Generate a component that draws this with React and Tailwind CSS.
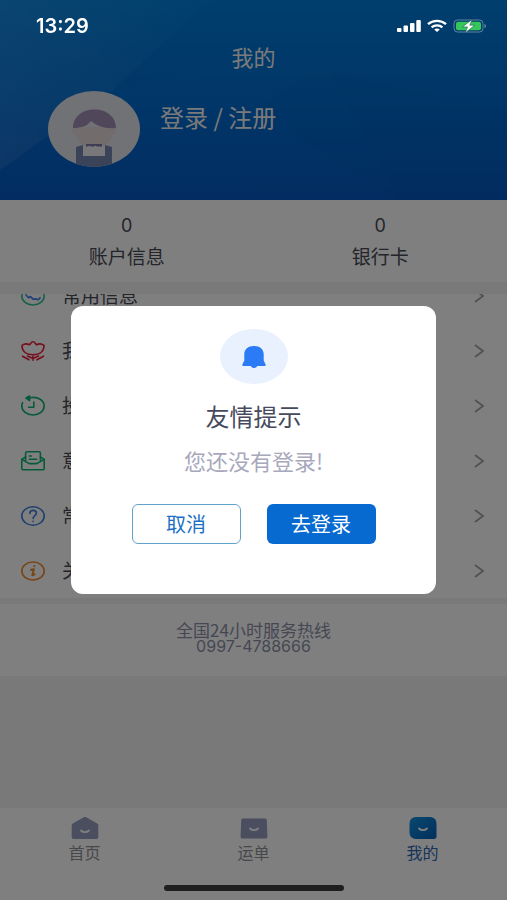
import { useState } from "react";

const MENU = [
    { label: "常用信息", Icon: InfoIcon },
    { label: "我的关注", Icon: FlowerIcon },
    { label: "投诉记录", Icon: HistoryIcon },
    { label: "意见反馈", Icon: MailIcon },
    { label: "常见问题", Icon: QuestionIcon },
    { label: "关于我们", Icon: AboutIcon },
];

const STATS = [
    { label: "账户信息", value: 0 },
    { label: "银行卡", value: 0 },
];

const TABS = [
    { label: "首页", Icon: HomeTabIcon },
    { label: "运单", Icon: OrderTabIcon },
    { label: "我的", Icon: MineTabIcon, active: true },
];

function IconBase({ color, children }) {
    return (
        <svg
            viewBox="0 0 26 22"
            className="h-[22px] w-[26px]"
            fill="none"
            stroke={color}
            strokeWidth="1.6"
            strokeLinecap="round"
            strokeLinejoin="round"
            aria-hidden="true"
        >
            {children}
        </svg>
    );
}

function InfoIcon() {
    return (
        <IconBase color="#2fc48d">
            <ellipse cx="13" cy="11" rx="11.2" ry="9" />
            <path
                d="M6 10l2.500 2.600 2-1 2.500 2.600 3-.4 2 1 2-2"
                stroke="#4a86e8"
                strokeWidth="1.8"
            />
        </IconBase>
    );
}

function FlowerIcon() {
    return (
        <IconBase color="#e8203c">
            <path d="M2 5.400C4.600 3.400 7.400 3.600 9.400 4.800 10.600 4 11.200 1.800 13 1.800s2.400 2.200 3.600 3c2-1.200 4.800-1.400 7.400.6 0 6-4.500 9.400-11 9.400S2 11.400 2 5.400z" />
            <path d="M13 16v4.200M2.500 16.200l6.500 3.600M7.500 16l5.500 2.400 5.500-2.400M23.500 16.200L17 19.800" />
        </IconBase>
    );
}

function HistoryIcon() {
    return (
        <IconBase color="#0fb573">
            <path d="M10.500 2.700C18 1.300 24.200 5.400 24.200 11c0 5-5 9-11.200 9S1.800 16 1.800 11c0-1.300.3-2.300.8-3.300" />
            <path d="M6 3l3.600-2v4.600z" fill="#0fb573" />
            <path d="M13.800 7v5.200H8.600" />
        </IconBase>
    );
}

function MailIcon() {
    return (
        <IconBase color="#0fb573">
            <path d="M5.600 10.500V3.200c0-.8.6-1.400 1.400-1.400h12c.8 0 1.400.6 1.400 1.400v7.300" />
            <path d="M5.600 7L1.800 9.400v9c0 .8.600 1.400 1.400 1.400h19.600c.8 0 1.400-.6 1.400-1.400v-9L20.400 7" />
            <path d="M1.800 9.400l7.400 4.200h7.600l7.400-4.200M9.400 6h2M9.400 9.300h7.400" />
        </IconBase>
    );
}

function QuestionIcon() {
    return (
        <IconBase color="#3b7de0">
            <ellipse cx="13" cy="11" rx="11.2" ry="9.200" />
            <path d="M9.800 8.400c0-1.900 1.400-3 3.300-3s3.300 1.100 3.300 2.800c0 2.300-3.300 2.500-3.300 5.200M13.100 16.300v.2" />
        </IconBase>
    );
}

function AboutIcon() {
    return (
        <IconBase color="#ee8a2c">
            <ellipse cx="13" cy="11" rx="11.2" ry="9" />
            <path
                d="M11 9.800l2.800-.5-1.500 6 2.300-.9M14.300 6.100l.1-.1"
                strokeWidth="2"
            />
        </IconBase>
    );
}

function Smile() {
    return (
        <path
            d="M10 12.500c2.200 2.200 5.800 2.200 8 0"
            fill="none"
            stroke="#fff"
            strokeWidth="1.800"
            strokeLinecap="round"
        />
    );
}

function HomeTabIcon() {
    return (
        <svg viewBox="0 0 28 24" className="h-6 w-7" aria-hidden="true">
            <path
                d="M12.400 1.500c1-.6 2.200-.6 3.200 0l10.200 5.700c1 .5 1.500 1.300 1.500 2.300v11.500c0 1.200-.8 2-2 2H2.700c-1.200 0-2-.8-2-2V9.500c0-1 .5-1.800 1.500-2.300z"
                fill="#949cbd"
            />
            <g transform="translate(0 2)">
                <Smile />
            </g>
        </svg>
    );
}

function OrderTabIcon() {
    return (
        <svg viewBox="0 0 28 24" className="h-6 w-7" aria-hidden="true">
            <path
                d="M3 2.500h22c1 0 1.700.7 1.800 1.700l.6 16.500c0 1-.7 1.800-1.800 1.800H2.400C1.300 22.500.6 21.700.600 20.700l.6-16.500C1.300 3.200 2 2.500 3 2.500z"
                fill="#949cbd"
            />
            <Smile />
        </svg>
    );
}

function MineTabIcon() {
    return (
        <svg viewBox="0 0 28 24" className="h-6 w-7" aria-hidden="true">
            <defs>
                <linearGradient id="mine" x1="0" y1="0" x2="1" y2="1">
                    <stop offset="0" stopColor="#1290e0" />
                    <stop offset="1" stopColor="#0560b8" />
                </linearGradient>
            </defs>
            <path
                d="M8 1h12c5 0 7.500 2.400 7.500 7v12.500c0 1.500-1 2.500-2.500 2.500H8C3 23 .5 20.600.5 16V8C.500 3.400 3 1 8 1z"
                fill="url(#mine)"
            />
            <Smile />
        </svg>
    );
}

function Chevron() {
    return (
        <svg
            viewBox="0 0 12 14"
            className="h-3.5 w-3"
            fill="none"
            stroke="#a3a3a8"
            strokeWidth="1.800"
            aria-hidden="true"
        >
            <path d="M2 1l8 6-8 6" />
        </svg>
    );
}

function Avatar() {
    return (
        <svg
            viewBox="0 0 92 76"
            className="h-[76px] w-[92px] shrink-0"
            role="img"
            aria-label="avatar"
        >
            <clipPath id="face">
                <ellipse cx="46" cy="38" rx="46" ry="38" />
            </clipPath>
            <g clipPath="url(#face)">
                <rect width="92" height="76" fill="#e2e5ec" />
                <path
                    d="M28 36h36c5-1 5 7 0 8-1 8-8 12-18 12s-17-4-18-12c-5-1-5-9 0-8z"
                    fill="#e6d8d9"
                />
                <path
                    d="M25 37c0-11 9-18.500 21.500-18.500S68 26 68 37c-11 1-19-2-25-7-4 5-9 7-18 7z"
                    fill="#a090b4"
                />
                <path d="M28 56l7-2v11h22V54l7 2v20H28z" fill="#7486b0" />
                <path d="M35 55h22v10H35z" fill="#f0f1f4" />
                <path
                    d="M38 53h16v2.500h-5l-1.500-1-1.500 1h-3l-1.500-1-1.500 1h-2z"
                    fill="#8078a8"
                />
            </g>
        </svg>
    );
}

function StatusBar() {
    return (
        <div className="absolute inset-x-0 top-0 z-20 flex items-center justify-between pt-3 pr-5 pl-9 text-white">
            <span className="font-['Inter',sans-serif] text-xl leading-7 font-semibold">13:29</span>
            <div className="flex items-center gap-1.5">
                <svg viewBox="0 0 24 14" className="h-3.5 w-6" fill="#fff">
                    <rect x="0" y="9" width="4.500" height="4" rx="1" />
                    <rect x="6.500" y="6.500" width="4.500" height="6.500" rx="1" />
                    <rect x="13" y="4" width="4.500" height="9" rx="1" />
                    <rect x="19.300" y="1" width="4.500" height="12" rx="1" />
                </svg>
                <svg
                    viewBox="0 0 20 14"
                    className="h-3.5 w-5"
                    fill="none"
                    stroke="#fff"
                    strokeWidth="2.300"
                >
                    <path d="M1 5.200c5-4.400 13-4.400 18 0M4.600 8.400c3-2.600 7.800-2.600 10.800 0" />
                    <path d="M7.200 10.500c1.600-1.300 4-1.300 5.600 0L10 13z" fill="#fff" stroke="none" />
                </svg>
                <svg viewBox="0 0 34 14" className="h-3.5 w-[34px]">
                    <rect
                        x="1"
                        y="1"
                        width="29"
                        height="12"
                        rx="3.500"
                        fill="none"
                        stroke="#5f87a5"
                    />
                    <rect x="3" y="2.800" width="25" height="8.400" rx="2" fill="#34c759" />
                    <path d="M31.500 5v4c1-.3 1.600-1.100 1.600-2s-.6-1.700-1.600-2z" fill="#5f87a5" />
                    <path
                        d="M19 .4L9.500 7.900h5L12.300 13.800 21.800 6.200h-5z"
                        fill="#fff"
                        stroke="#1c5a50"
                        strokeWidth=".6"
                    />
                </svg>
            </div>
        </div>
    );
}

function LoginDialog({ onClose }) {
    return (
        <div className="fixed inset-0 z-10 flex items-center justify-center bg-black/50">
            <div
                role="dialog"
                aria-modal="true"
                aria-labelledby="dialog-title"
                className="flex w-[72%] max-w-md flex-col items-center rounded-xl bg-white px-4 pt-[23px] pb-[50px]"
            >
                <div className="flex h-[55px] w-[68px] items-center justify-center rounded-[50%] bg-[#e9f1fe]">
                    <svg viewBox="0 0 24 24" className="h-6 w-6" fill="#2b7bf6" aria-hidden="true">
                        <path d="M12 1C6 1 2.300 4.400 2.300 9.200v6.300L.5 19.300c-.4.900 0 1.700 1 1.700h21c1 0 1.400-.8 1-1.700l-1.800-3.800V9.200C21.700 4.400 18 1 12 1zM8.800 21c.5 1.200 1.700 1.900 3.200 1.900s2.700-.7 3.200-1.900z" />
                    </svg>
                </div>
                <h2
                    id="dialog-title"
                    className="mt-4 text-2xl leading-8 font-normal text-[#474a5c]"
                >
                    友情提示
                </h2>
                <p className="mt-3.5 text-[22px] leading-7 text-[#a8a8bd]">您还没有登录!</p>
                <div className="mt-[30px] flex gap-[26px] text-xl">
                    <button
                        type="button"
                        onClick={onClose}
                        className="h-10 w-[109px] rounded-md border border-[#5fa3cd] text-[#1b70c6]"
                    >
                        取消
                    </button>
                    <button
                        type="button"
                        onClick={onClose}
                        className="h-10 w-[109px] rounded-md bg-[#076ad0] text-white"
                    >
                        去登录
                    </button>
                </div>
            </div>
        </div>
    );
}

export default function App() {
    const [dialogOpen, setDialogOpen] = useState(true);

    return (
        <div className="relative flex min-h-screen flex-col bg-[#f2f2f2] font-['Noto_Sans_CJK_SC',sans-serif] text-[#474a56]">
            <StatusBar />

            {/* Header */}
            <header className="relative h-[200px] overflow-hidden bg-gradient-to-b from-[#0080de] to-[#065ac4] pt-[42px] text-[#f4f4f4]">
                <svg
                    viewBox="0 0 507 200"
                    preserveAspectRatio="none"
                    className="absolute inset-0 h-full w-full"
                    aria-hidden="true"
                >
                    <defs>
                        <linearGradient id="glow" x1="0" y1="0" x2="1" y2="0">
                            <stop offset="0" stopColor="#fff" stopOpacity=".08" />
                            <stop offset="1" stopColor="#fff" stopOpacity="0" />
                        </linearGradient>
                    </defs>
                    <path d="M0 0h210L115 88 0 170z" fill="url(#glow)" />
                    <path d="M210 0L115 88 254 60 330 72 400 200h107V0z" fill="#003f90" opacity=".03" />
                    <path d="M254 110l60-40 193 40v90H400z" fill="#004a98" opacity=".05" />
                </svg>
                <h1 className="relative text-center text-[22px] leading-7 font-normal">我的</h1>
                <div className="relative mt-[21px] flex items-start gap-5 pl-12">
                    <Avatar />
                    <button type="button" className="mt-2.5 text-2xl leading-8">
                        登录 / 注册
                    </button>
                </div>
            </header>

            {/* Account numbers */}
            <section className="grid grid-cols-2 bg-white pt-3 pb-2.5 text-center">
                {STATS.map((s) => (
                    <div key={s.label}>
                        <div className="font-['Inter',sans-serif] text-lg leading-7">{s.value}</div>
                        <div className="text-[19px] leading-8">{s.label}</div>
                    </div>
                ))}
            </section>

            {/* Menu, scrolled a little under the section above */}
            <nav className="mt-3 flex h-[304px] flex-col justify-end overflow-hidden bg-white">
                {MENU.map(({ label, Icon }) => (
                    <a
                        key={label}
                        href="#"
                        className="flex h-[55px] shrink-0 items-center pr-[22px] pl-5 text-[19px]"
                    >
                        <Icon />
                        <span className="ml-4 flex-1">{label}</span>
                        <Chevron />
                    </a>
                ))}
            </nav>

            <section className="mt-1.5 bg-white pt-[18px] pb-[22px] text-center text-[#8c8fa6]">
                <p className="text-[17px] leading-4">全国24小时服务热线</p>
                <p className="font-['Inter',sans-serif] text-base leading-4">0997-4788666</p>
            </section>

            <div className="flex-1" />

            {/* Tab bar */}
            <footer className="grid h-[92px] grid-cols-3 bg-white pt-2">
                {TABS.map(({ label, Icon, active }) => (
                    <a
                        key={label}
                        href="#"
                        className={`flex flex-col items-center text-base leading-5 ${
                            active ? "text-[#2c68b4]" : "text-[#8f9096]"
                        }`}
                    >
                        <Icon />
                        <span className="mt-0.5">{label}</span>
                    </a>
                ))}
            </footer>

            {dialogOpen && <LoginDialog onClose={() => setDialogOpen(false)} />}

            {/* Home indicator */}
            <div className="absolute bottom-[9px] left-1/2 z-20 h-1.5 w-[180px] -translate-x-1/2 rounded-full bg-[#1f1f1f]" />
        </div>
    );
}
